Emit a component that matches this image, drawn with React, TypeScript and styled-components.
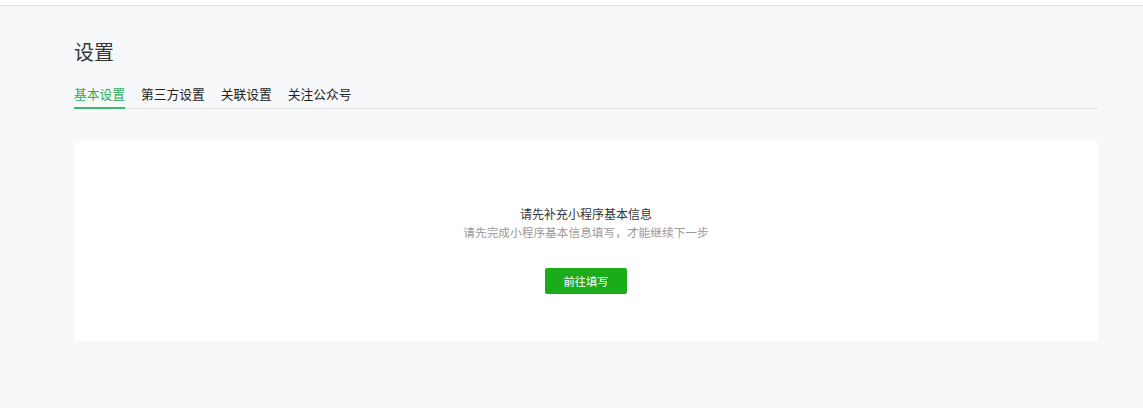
import React from "react";
import styled, { createGlobalStyle } from "styled-components";

const GlobalStyle = createGlobalStyle`
  html, body {
    margin: 0;
    padding: 0;
    background: #f7f8fa;
    font-family: "Noto Sans CJK SC", "Liberation Sans", sans-serif;
  }
`;

const TopBar = styled.div`
  height: 5px;
  background: #ffffff;
  border-bottom: 1px solid #e2e3e5;
  box-shadow: 0 1px 2px rgba(0, 0, 0, 0.04);
`;

const Page = styled.div`
  width: 1024px;
  margin-left: 74px;
  padding-top: 32px;
  padding-bottom: 66px;
`;

const Title = styled.h2`
  margin: 0;
  font-size: 20px;
  font-weight: 400;
  line-height: 28px;
  color: #353535;
`;

const Tabs = styled.div`
  display: flex;
  gap: 16px;
  margin-top: 18px;
  border-bottom: 1px solid #e0e1e3;
`;

const Tab = styled.div<{ $active?: boolean }>`
  font-size: 12.75px;
  line-height: 20px;
  padding-bottom: 3px;
  margin-bottom: -1px;
  color: ${(p) => (p.$active ? "#2aae5c" : "#222222")};
  border-bottom: 2px solid ${(p) => (p.$active ? "#3cba6b" : "transparent")};
`;

const Card = styled.div`
  margin-top: 32px;
  height: 200px;
  background: #ffffff;
  display: flex;
  flex-direction: column;
  align-items: center;
  padding-top: 64px;
  box-sizing: border-box;
`;

const Heading = styled.div`
  font-size: 12px;
  line-height: 18px;
  color: #353535;
`;

const Sub = styled.div`
  font-size: 11.7px;
  line-height: 18px;
  color: #9a9a9a;
`;

const Button = styled.button`
  margin-top: 27px;
  width: 82px;
  height: 26px;
  border: none;
  border-radius: 2px;
  background: #1aad19;
  color: #ffffff;
  font-family: inherit;
  font-size: 11.3px;
  cursor: pointer;
`;

const tabs = ["基本设置", "第三方设置", "关联设置", "关注公众号"];

export default function App() {
  return (
    <>
      <GlobalStyle />
      <TopBar />
      <Page>
        <Title>设置</Title>
        <Tabs>
          {tabs.map((t, i) => (
            <Tab key={t} $active={i === 0}>
              {t}
            </Tab>
          ))}
        </Tabs>
        <Card>
          <Heading>请先补充小程序基本信息</Heading>
          <Sub>请先完成小程序基本信息填写，才能继续下一步</Sub>
          <Button>前往填写</Button>
        </Card>
      </Page>
    </>
  );
}
